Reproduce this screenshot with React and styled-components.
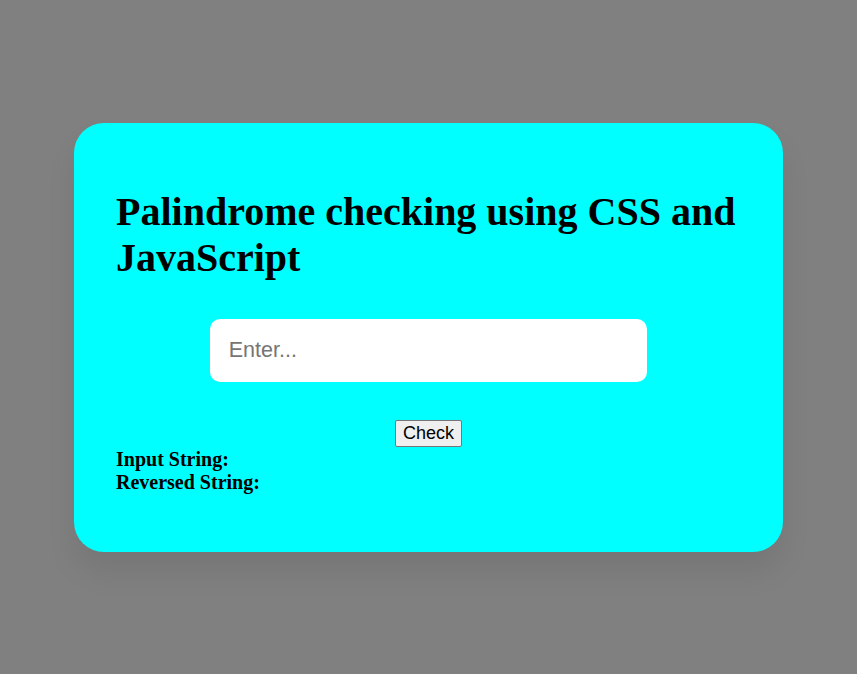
import React from "react";
import styled, { createGlobalStyle } from "styled-components";

const Global = createGlobalStyle`
  html, body { margin: 0; padding: 0; }
  body {
    background: #808080;
    font-family: "Liberation Serif", "Times New Roman", serif;
  }
`;

const Page = styled.div`
  min-height: 100vh;
  display: flex;
  align-items: center;
  justify-content: center;
`;

const Card = styled.div`
  width: 709px;
  box-sizing: border-box;
  background: #00ffff;
  border-radius: 30px;
  padding: 42px 42px 58px;
  box-shadow: 0 20px 30px rgba(0, 0, 0, 0.08);
`;

const Title = styled.h1`
  font-size: 40px;
  font-weight: bold;
  margin: 24px 0 38px;
  line-height: 46px;
  color: #000;
`;

const InputRow = styled.div`
  display: flex;
  justify-content: center;
`;

const TextInput = styled.input`
  width: 70%;
  height: 63px;
  box-sizing: border-box;
  border: none;
  outline: none;
  border-radius: 10px;
  background: #fff;
  padding: 0 19px;
  font-family: "Liberation Sans", Arial, sans-serif;
  font-size: 21.5px;
  color: #000;
  &::placeholder { color: #757575; }
`;

const ButtonRow = styled.div`
  display: flex;
  justify-content: center;
  margin-top: 38px;
  margin-bottom: 1px;
`;

const Button = styled.button`
  font-family: "Liberation Sans", Arial, sans-serif;
  font-size: 18px;
  height: 27px;
  padding: 1px 7px;
  background: #efefef;
  border: 1px solid #767676;
  border-radius: 2px;
  color: #000;
  line-height: 1;
`;

const Result = styled.div`
  font-size: 20px;
  font-weight: bold;
  line-height: 23px;
  color: #000;
`;

export default function App() {
  return (
    <>
      <Global />
      <Page>
        <Card>
          <Title>Palindrome checking using CSS and JavaScript</Title>
          <InputRow>
            <TextInput type="text" placeholder="Enter..." />
          </InputRow>
          <ButtonRow>
            <Button>Check</Button>
          </ButtonRow>
          <Result>Input String:</Result>
          <Result>Reversed String:</Result>
        </Card>
      </Page>
    </>
  );
}
